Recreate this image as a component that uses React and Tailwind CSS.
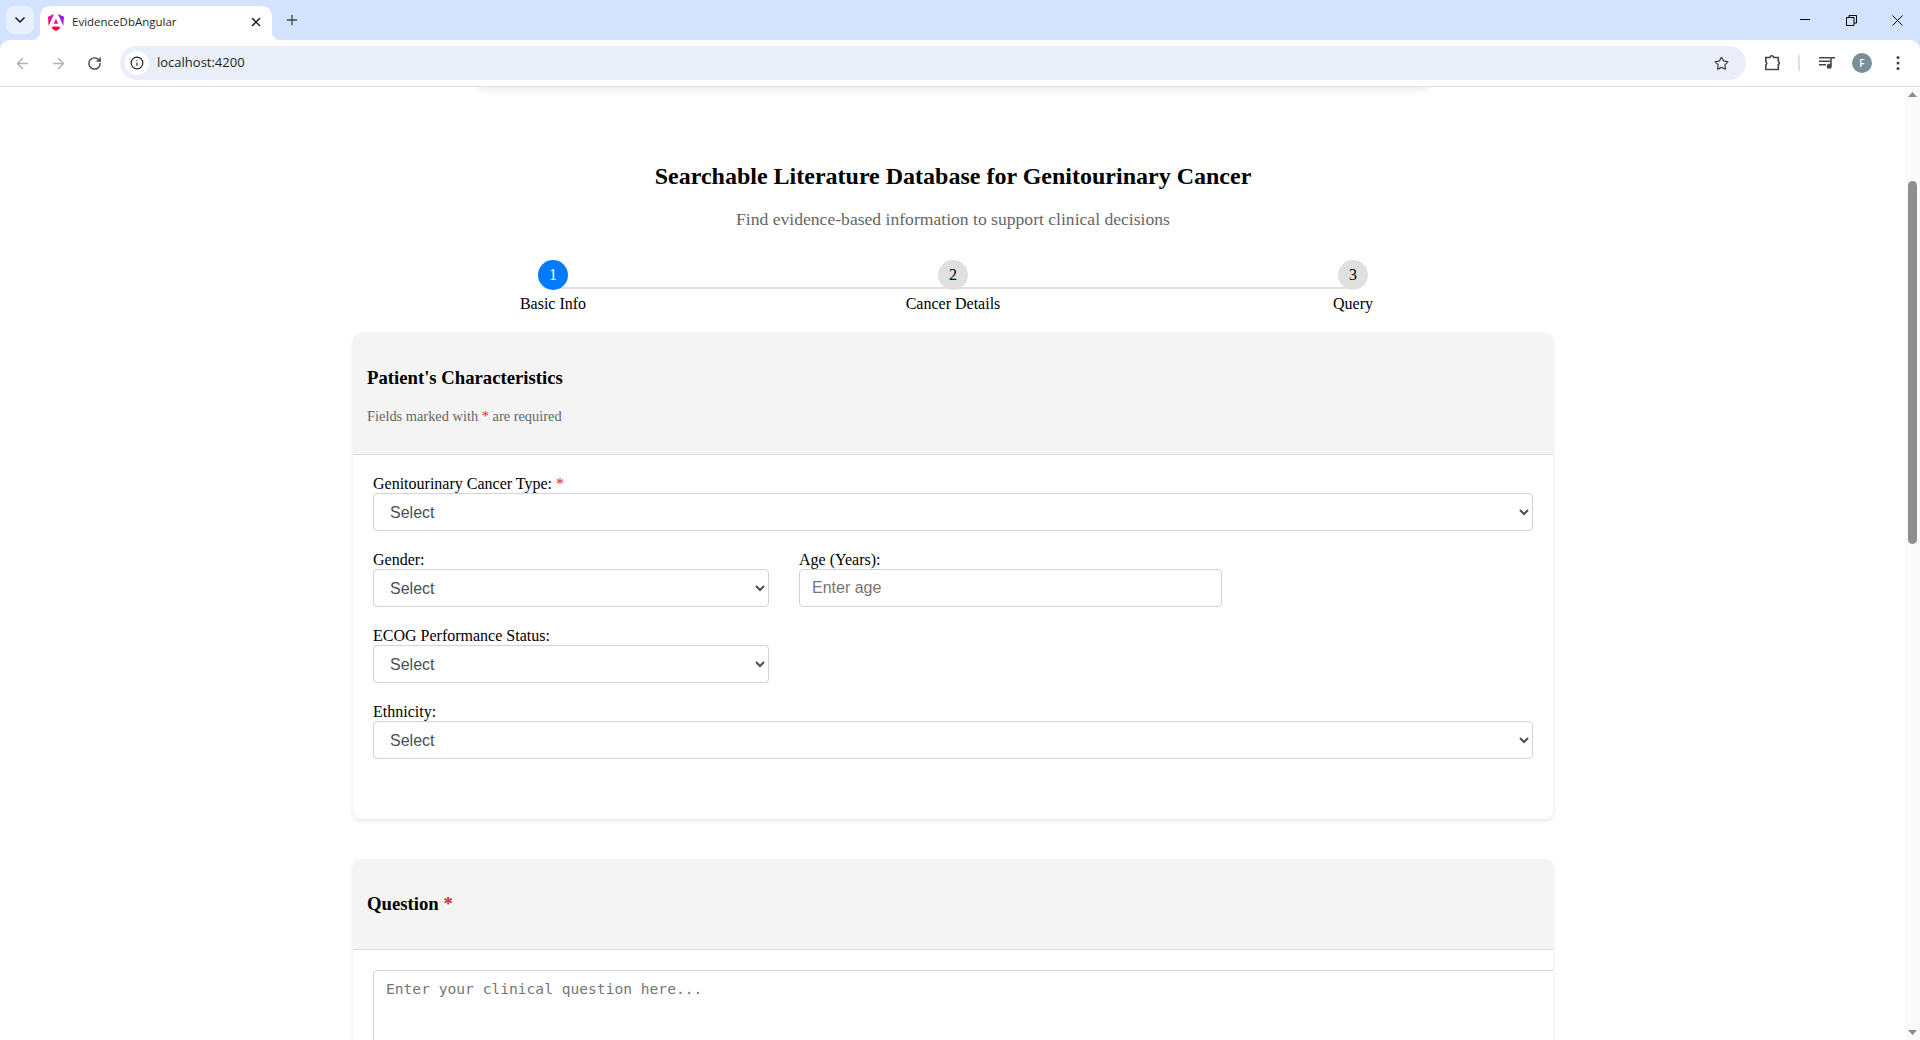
import { ArrowLeft, ArrowRight, ChevronDown, Info, Plus, RotateCw, Star, X } from 'lucide-react'

const SERIF = "font-['Liberation_Serif',serif]"
const FIELD = "h-[38px] rounded border border-[#ced4da] bg-white pl-3 font-['Liberation_Sans',sans-serif] text-base text-[#495057]"

function AngularLogo() {
  return (
    <svg aria-hidden="true" width="16" height="17" viewBox="0 0 223 236">
      <defs>
        <linearGradient id="ng" x1="60" y1="236" x2="200" y2="20" gradientUnits="userSpaceOnUse">
          <stop stopColor="#E40035" />
          <stop offset="0.28" stopColor="#F60A48" />
          <stop offset="0.5" stopColor="#E910A0" />
          <stop offset="0.82" stopColor="#A320E8" />
          <stop offset="1" stopColor="#7A10F0" />
        </linearGradient>
      </defs>
      <path
        fill="url(#ng)"
        d="m222.077 39.192-8.019 125.923L137.387 0l84.69 39.192Zm-53.105 162.825-57.933 33.056-57.934-33.056 11.783-28.556h92.301l11.783 28.556ZM111.039 62.675l30.357 73.803H80.681l30.358-73.803ZM7.937 165.115 0 39.192 84.69 0 7.937 165.115Z"
      />
    </svg>
  )
}

function TabStrip() {
  return (
    <div className="flex h-10 items-start bg-[#d3e3fd]">
      <div className="ml-1.5 mt-1.5 flex h-7 w-7 items-center justify-center rounded-lg bg-[#e9f0fd]">
        <ChevronDown size={16} strokeWidth={2.5} className="text-[#1f1f1f]" />
      </div>
      <div className="relative ml-1.5 mt-1.5 flex h-[34px] w-[232px] items-center rounded-t-[10px] bg-white pb-0.5 pl-2">
        <svg aria-hidden="true" className="absolute -left-2 bottom-0" width="8" height="8" viewBox="0 0 8 8">
          <path d="M8 0v8H0a8 8 0 0 0 8-8Z" fill="#fff" />
        </svg>
        <svg aria-hidden="true" className="absolute -right-2 bottom-0" width="8" height="8" viewBox="0 0 8 8">
          <path d="M0 0v8h8a8 8 0 0 1-8-8Z" fill="#fff" />
        </svg>
        <AngularLogo />
        <span className="ml-2 w-[177px] font-['Open_Sans',sans-serif] text-[11.5px] text-[#1f1f1f]">EvidenceDbAngular</span>
        <X size={14} strokeWidth={2.5} className="text-[#1f1f1f]" />
      </div>
      <Plus size={16} strokeWidth={2} className="ml-3 mt-3 text-[#444746]" />
      <div className="ml-auto flex h-full items-start text-black">
        <svg aria-hidden="true" className="mr-9 mt-[15px]" width="10" height="10" viewBox="0 0 10 10">
          <path d="M0 4.500h10" stroke="currentColor" />
        </svg>
        <svg aria-hidden="true" className="mr-[35px] mt-[15px]" width="11" height="11" viewBox="0 0 11 11" fill="none" stroke="currentColor">
          <path d="M.5 2.500h7.500v8h-7.500zM3 2.500V.5h7.500v7.500H8" />
        </svg>
        <svg aria-hidden="true" className="mr-[17px] mt-[15px]" width="11" height="11" viewBox="0 0 11 11" stroke="currentColor">
          <path d="M.5.5l10 10M10.500.5l-10 10" />
        </svg>
      </div>
    </div>
  )
}

function Toolbar() {
  return (
    <div className="flex h-[47px] items-start border-b border-[#dfe1e5] bg-[#d3e3fd]">
      <div className="flex h-[46px] w-full items-center rounded-t-[10px] bg-white text-[#444746]">
        <ArrowLeft size={17} className="ml-3.5 text-[#b0b1b2]" />
        <ArrowRight size={17} className="ml-[19px] text-[#b0b1b2]" />
        <RotateCw size={15} strokeWidth={2.25} className="ml-5" />
        <div className="ml-[18px] flex h-[34px] w-[1626px] items-center rounded-full bg-[#e9eef8] pl-[5px]">
          <div className="flex h-6 w-6 items-center justify-center rounded-full bg-white">
            <Info size={14} strokeWidth={2} className="text-[#1f1f1f]" />
          </div>
          <span className="ml-2 font-['Open_Sans',sans-serif] text-[13px] text-[#1f1f1f]">localhost:4200</span>
          <Star size={15} strokeWidth={2} className="ml-auto mr-[17px]" />
        </div>
        <svg aria-hidden="true" className="ml-[18px]" width="18" height="18" viewBox="0 0 18 18" fill="none" stroke="currentColor" strokeWidth="1.6">
          <path d="M1.800 3.500H6a1.800 1.800 0 0 1 3.600 0h4.700v4.100a1.500 1.500 0 0 1 0 2.900v5H1.800v-4.400a2.100 2.100 0 0 0 0-3.400z" />
        </svg>
        <div className="ml-4 h-[16px] w-0.5 bg-[#d3e3fd]" />
        <svg aria-hidden="true" className="ml-[19px]" width="16" height="14" viewBox="0 0 16 14" fill="currentColor">
          <path d="M0 1h11v1.500H0zM0 4.500h11V6H0zM0 8h7v1.500H0z" />
          <path d="M11.200 1H16v1.600h-3.200v7.600a2.500 2.500 0 1 1-1.600-2.300z" />
        </svg>
        <div className="ml-[17px] flex h-5 w-5 items-center justify-center rounded-full bg-[#78909c] font-['Open_Sans',sans-serif] text-[10px] font-semibold text-white">
          F
        </div>
        <svg aria-hidden="true" className="ml-6" width="4" height="16" viewBox="0 0 4 16" fill="currentColor">
          <circle cx="2" cy="2.500" r="1.500" />
          <circle cx="2" cy="8" r="1.500" />
          <circle cx="2" cy="13.500" r="1.500" />
        </svg>
      </div>
    </div>
  )
}

function Scrollbar() {
  return (
    <div className="flex w-[15px] shrink-0 flex-col items-center bg-[#fafafa]">
      <svg aria-hidden="true" className="mt-[5px]" width="9" height="5" viewBox="0 0 9 5">
        <path d="M4.500 0 9 5H0z" fill="#8a8a8a" />
      </svg>
      <div className="mt-[84px] h-[363px] w-[9px] rounded-[5px] bg-[#8f8f8f]" />
      <svg aria-hidden="true" className="mt-auto mb-[5px]" width="9" height="5" viewBox="0 0 9 5">
        <path d="M4.500 5 9 0H0z" fill="#8a8a8a" />
      </svg>
    </div>
  )
}

function Required() {
  return <span className="text-[#e3242b]">*</span>
}

function Step({ n, label, active }) {
  return (
    <div className="relative z-10 flex flex-col items-center">
      <div
        className={
          active
            ? 'flex h-[30px] w-[30px] items-center justify-center rounded-full bg-[#007bff] text-white'
            : 'flex h-[30px] w-[30px] items-center justify-center rounded-full bg-[#e0e0e0] text-black'
        }
      >
        {n}
      </div>
      <div className="mt-[5px] leading-[18px]">{label}</div>
    </div>
  )
}

function Stepper() {
  return (
    <div className="relative grid w-[1200px] grid-cols-3 text-base">
      <div className="absolute left-[200px] right-[200px] top-[27px] h-0.5 bg-[#e0e0e0]" />
      <Step n="1" label="Basic Info" active />
      <Step n="2" label="Cancer Details" />
      <Step n="3" label="Query" />
    </div>
  )
}

function Field({ label, required, children, className }) {
  return (
    <div className={className}>
      <label className="block leading-[18px]">
        {label} {required && <Required />}
      </label>
      {children}
    </div>
  )
}

function SelectBox({ className }) {
  return (
    <select className={`${FIELD} ${className}`} defaultValue="">
      <option value="">Select</option>
    </select>
  )
}

export default function App() {
  return (
    <div className={`flex h-[1040px] w-[1920px] flex-col overflow-hidden bg-white text-black ${SERIF}`}>
      <TabStrip />
      <Toolbar />
      <div className="flex min-h-0 flex-1">
        <main className="min-w-0 flex-1 overflow-hidden pl-px">
          {/* nav card scrolled out of view, only its shadow is left */}
          <div className="mx-auto -mt-5 h-5 w-[950px] shadow-[0_2px_10px_rgba(0,0,0,0.1)]" />
          <div className="flex flex-col items-center">
            <h1 className="mt-[75px] text-2xl font-bold leading-[28px]">Searchable Literature Database for Genitourinary Cancer</h1>
            <p className="mt-[19px] text-[17.6px] leading-5 text-[#666]">Find evidence-based information to support clinical decisions</p>
            <div className="mt-[31px]">
              <Stepper />
            </div>

            <section className="mt-5 w-[1200px] rounded-lg bg-white shadow-[0_2px_4px_rgba(0,0,0,0.1)]">
              <div className="h-[122px] rounded-t-lg border-b border-[#ddd] bg-[#f4f4f4] px-[14px] pt-[34px]">
                <h2 className="text-[18.72px] font-bold leading-[22px]">Patient's Characteristics</h2>
                <p className="mt-[19px] text-[14.4px] leading-4 text-[#666]">
                  Fields marked with <Required /> are required
                </p>
              </div>
              <div className="flex flex-col gap-5 px-5 pb-[60px] pt-5">
                <Field label="Genitourinary Cancer Type:" required>
                  <SelectBox className="block w-full" />
                </Field>
                <div className="flex gap-[30px]">
                  <Field label="Gender:">
                    <SelectBox className="block w-[396px]" />
                  </Field>
                  <Field label="Age (Years):">
                    <input type="text" placeholder="Enter age" className={`${FIELD} block w-[423px] placeholder:text-[#757575]`} />
                  </Field>
                </div>
                <Field label="ECOG Performance Status:">
                  <SelectBox className="block w-[396px]" />
                </Field>
                <Field label="Ethnicity:">
                  <SelectBox className="block w-full" />
                </Field>
              </div>
            </section>

            <section className="mt-10 w-[1200px] overflow-hidden rounded-lg bg-white shadow-[0_2px_4px_rgba(0,0,0,0.1)]">
              <div className="h-[91px] border-b border-[#ddd] bg-[#f4f4f4] px-[14px] pt-[34px]">
                <h2 className="text-[18.72px] font-bold leading-[22px]">
                  Question <Required />
                </h2>
              </div>
              <div className="pl-5 pt-5">
                <textarea
                  placeholder="Enter your clinical question here..."
                  className="block h-[150px] w-[1200px] rounded border border-[#ced4da] px-3 pb-2.5 pt-[7px] font-['DejaVu_Sans_Mono',monospace] text-[14.6px] placeholder:text-[#757575]"
                />
              </div>
            </section>
          </div>
        </main>
        <Scrollbar />
      </div>
    </div>
  )
}
